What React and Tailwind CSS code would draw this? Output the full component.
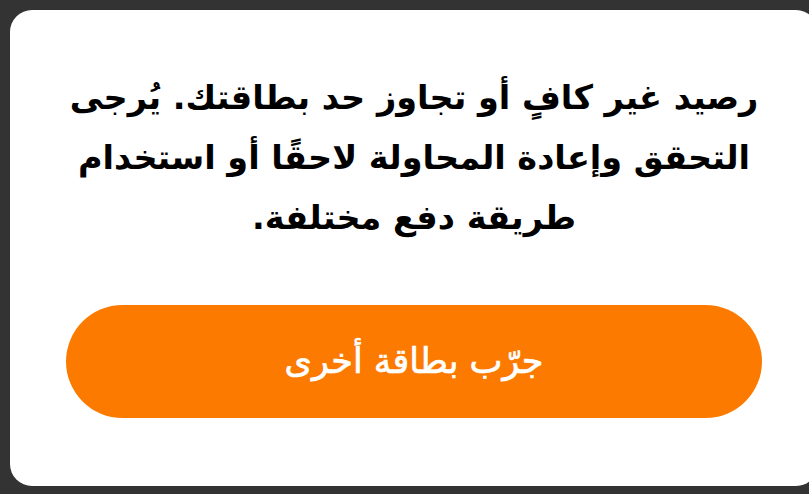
export default function App() {
  return (
    <div className="w-[809px] h-[494px] overflow-hidden bg-[#333333] pt-[10px] pl-[10px]">
      <div
        dir="rtl"
        className="w-[808px] h-[476px] bg-white rounded-[22px] flex flex-col items-center pt-[58px] px-[40px]"
        style={{ fontFamily: '"DejaVu Sans", sans-serif' }}
      >
        <p className="text-[33.5px] leading-[60px] font-bold text-black text-center whitespace-nowrap">
          رصيد غير كافٍ أو تجاوز حد بطاقتك. يُرجى
          <br />
          التحقق وإعادة المحاولة لاحقًا أو استخدام
          <br />
          طريقة دفع مختلفة.
        </p>
        <button className="mt-[57px] w-[696px] h-[113px] rounded-full bg-[#fc7a00] text-white text-[35px] [-webkit-text-stroke:0.7px_white] flex items-center justify-center">
          جرّب بطاقة أخرى
        </button>
      </div>
    </div>
  );
}
